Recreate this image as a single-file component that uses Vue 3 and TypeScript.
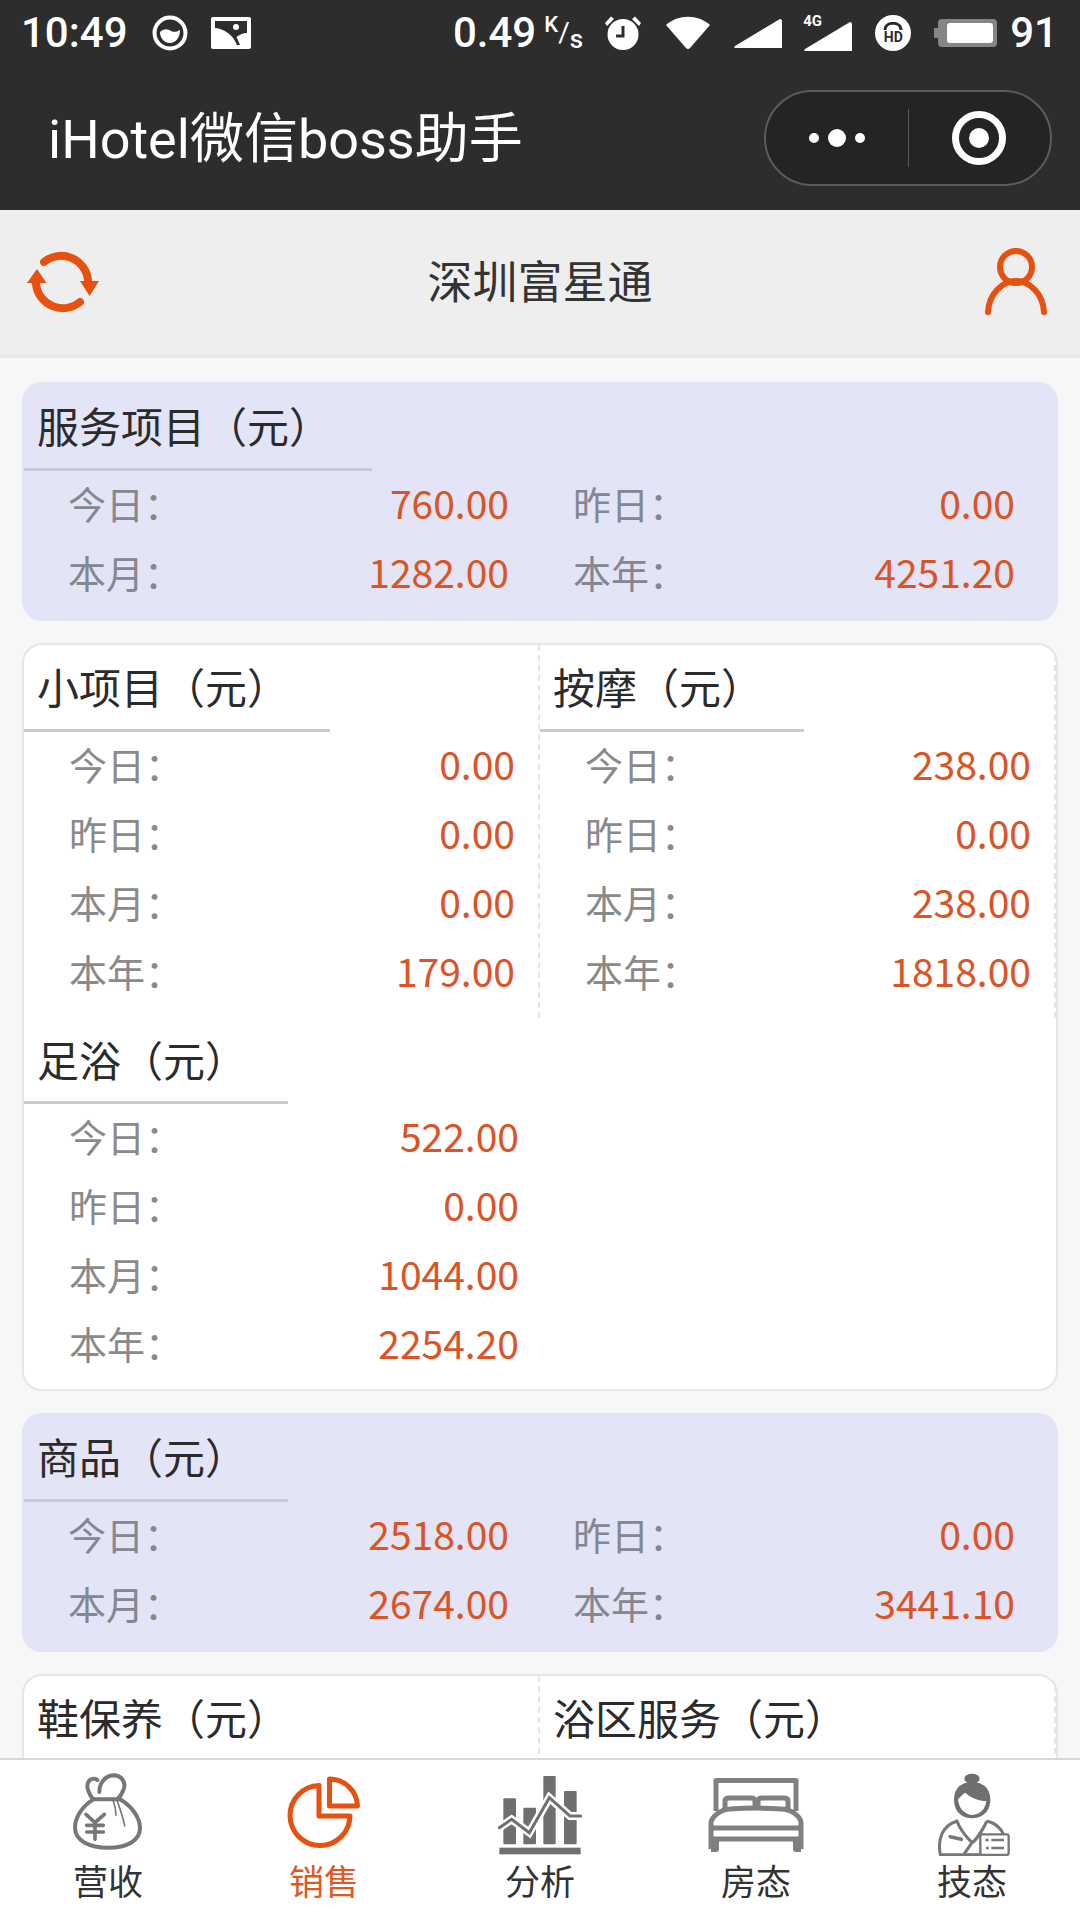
<script setup lang="ts">
interface Stat {
  label: string;
  value: string;
}
interface Section {
  title: string;
  stats: Stat[];
}

const stats = (today: string, yesterday: string, month: string, year: string): Stat[] => [
  { label: "今日：", value: today },
  { label: "昨日：", value: yesterday },
  { label: "本月：", value: month },
  { label: "本年：", value: year },
];

const service: Section = { title: "服务项目（元）", stats: stats("760.00", "0.00", "1282.00", "4251.20") };
const goods: Section = { title: "商品（元）", stats: stats("2518.00", "0.00", "2674.00", "3441.10") };

const serviceItems: Section[] = [
  { title: "小项目（元）", stats: stats("0.00", "0.00", "0.00", "179.00") },
  { title: "按摩（元）", stats: stats("238.00", "0.00", "238.00", "1818.00") },
  { title: "足浴（元）", stats: stats("522.00", "0.00", "1044.00", "2254.20") },
];
const goodsItems: Section[] = [
  { title: "鞋保养（元）", stats: [] },
  { title: "浴区服务（元）", stats: [] },
];

const tabs = [
  { key: "income", label: "营收" },
  { key: "sales", label: "销售" },
  { key: "analysis", label: "分析" },
  { key: "rooms", label: "房态" },
  { key: "staff", label: "技态" },
];
</script>

<template>
  <div class="page">
    <div class="topbar">
      <div class="status">
        <span class="clock">10:49</span>
        <svg class="st-moon" width="36" height="36" viewBox="0 0 36 36">
          <circle cx="18" cy="18" r="15.5" fill="none" stroke="#fff" stroke-width="4" />
          <path d="M8 17C12 13 16 14 19 16C23 18 26 16 28 15C28 22 24 28 18 28C12 28 8 23 8 17Z" fill="#fff" />
        </svg>
        <svg class="st-pic" width="40" height="32" viewBox="0 0 40 32">
          <rect width="40" height="32" rx="2" fill="#fff" />
          <path d="M4 4H36V16C32 16 28 18 25.5 20L29 28H26C22 18 14 12 4 11Z" fill="#2d2d2d" />
          <circle cx="25" cy="10" r="3" fill="#fff" />
        </svg>
        <span class="grow"></span>
        <span class="clock">0.49</span>
        <span class="speed"><i class="k">K</i><i class="slash">/</i><i class="s">s</i></span>
        <svg class="st-alarm" width="38" height="36" viewBox="0 0 38 36">
          <circle cx="19" cy="19.5" r="15.5" fill="#fff" />
          <path d="M19 11V21H12" fill="none" stroke="#2d2d2d" stroke-width="3" />
          <path d="M1 8L7 1.5L10 4L3 11ZM37 8L31 1.5L28 4L35 11Z" fill="#fff" />
        </svg>
        <svg class="st-wifi" width="44" height="34" viewBox="0 0 44 34">
          <path d="M0 9C12 -2 32 -2 44 9L24 32Q22 34 20 32Z" fill="#fff" />
        </svg>
        <svg class="st-signal" width="48" height="29" viewBox="0 0 48 29">
          <path d="M46 0Q48 0 48 2V29H2Q-1 29 1 27Z" fill="#fff" />
        </svg>
        <span class="st-4g">
          <i>4G</i>
          <svg width="48" height="29" viewBox="0 0 48 29">
            <path d="M46 0Q48 0 48 2V29H2Q-1 29 1 27Z" fill="#fff" />
          </svg>
        </span>
        <span class="st-hd">
          <svg width="20" height="9" viewBox="0 0 20 9">
            <path d="M2 8C2 -1 18 -1 18 8" fill="none" stroke="#2d2d2d" stroke-width="3" />
          </svg>
          <i>HD</i>
        </span>
        <span class="battery"><span class="battery-fill"></span></span>
        <span class="clock">91</span>
      </div>
      <div class="nav">
        <span class="nav-title">iHotel微信boss助手</span>
        <div class="capsule">
          <div class="capsule-side">
            <span class="dot"></span>
            <span class="dot big"></span>
            <span class="dot"></span>
          </div>
          <span class="capsule-line"></span>
          <div class="capsule-side">
            <span class="target"><span class="target-core"></span></span>
          </div>
        </div>
      </div>
    </div>

    <div class="header">
      <svg width="72" height="64" viewBox="0 0 72 64">
        <path d="M17 12A27 27 0 0 1 61 30" fill="none" stroke="#e8500f" stroke-width="8" stroke-linecap="round" />
        <path d="M53 31H72L62.5 46Z" fill="#e8500f" />
        <path d="M53 52A27 27 0 0 1 9 34" fill="none" stroke="#e8500f" stroke-width="8" stroke-linecap="round" />
        <path d="M0 33H19.500L10 19Z" fill="#e8500f" />
      </svg>
      <span class="hotel">深圳富星通</span>
      <svg width="64" height="68" viewBox="0 0 64 68">
        <circle cx="32" cy="19" r="16" fill="none" stroke="#e8500f" stroke-width="6" />
        <path d="M4 64C5 46 18 33 32 33C46 33 59 46 60 64" fill="none" stroke="#e8500f" stroke-width="6" stroke-linecap="round" />
      </svg>
    </div>

    <div class="content">
      <section class="card tinted">
        <h3 class="title">{{ service.title }}</h3>
        <div class="pairs">
          <div v-for="stat in service.stats" :key="stat.label" class="row">
            <span class="label">{{ stat.label }}</span>
            <span class="value">{{ stat.value }}</span>
          </div>
        </div>
      </section>

      <section class="card">
        <div class="cells">
          <div v-for="(item, i) in serviceItems" :key="item.title" class="cell" :class="{ plain: i === 2 }">
            <h3 class="title">{{ item.title }}</h3>
            <div v-for="stat in item.stats" :key="stat.label" class="row">
              <span class="label">{{ stat.label }}</span>
              <span class="value">{{ stat.value }}</span>
            </div>
          </div>
        </div>
      </section>

      <section class="card tinted">
        <h3 class="title">{{ goods.title }}</h3>
        <div class="pairs">
          <div v-for="stat in goods.stats" :key="stat.label" class="row">
            <span class="label">{{ stat.label }}</span>
            <span class="value">{{ stat.value }}</span>
          </div>
        </div>
      </section>

      <section class="card">
        <div class="cells">
          <div v-for="item in goodsItems" :key="item.title" class="cell tall">
            <h3 class="title">{{ item.title }}</h3>
          </div>
        </div>
      </section>
    </div>

    <nav class="tabs">
      <div v-for="tab in tabs" :key="tab.key" class="tab" :class="{ active: tab.key === 'sales' }">
        <svg v-if="tab.key === 'income'" width="120" height="90" viewBox="-36 0 360 270">
          <g fill="none" stroke="#777" stroke-width="12" stroke-linecap="round" stroke-linejoin="round">
            <path d="M100 100C60 125 45 160 45 185C45 225 90 245 145 245C200 245 240 225 240 185C240 155 215 120 180 100Z" />
            <path d="M100 100C85 85 78 60 85 48C90 38 105 35 112 42" />
            <path d="M118 78C118 50 135 30 160 28C185 28 200 50 190 72C185 85 178 95 172 100" />
            <path d="M78 145L105 170L133 145M105 170V220M80 178H130M80 198H130" stroke-width="11" />
            <path d="M160 105C165 120 168 135 168 148M172 105C180 130 190 155 194 180" stroke-width="5" />
          </g>
        </svg>
        <svg v-else-if="tab.key === 'sales'" width="108" height="90" viewBox="0 0 108 90">
          <g fill="none" stroke="#e8500f" stroke-width="5" stroke-linejoin="round">
            <path d="M49 19.500A30 30 0 1 0 80 50L49 50Z" />
            <path d="M59.500 13A28 28 0 0 1 87.500 40L59.500 40Z" />
          </g>
        </svg>
        <svg v-else-if="tab.key === 'analysis'" width="100" height="90" viewBox="0 0 300 270">
          <g fill="#6f6f6f">
            <rect x="40" y="97" width="38" height="138" rx="3" />
            <rect x="100" y="125" width="38" height="110" rx="3" />
            <rect x="160" y="30" width="37" height="205" rx="3" />
            <rect x="222" y="75" width="38" height="160" rx="3" />
            <rect x="28" y="245" width="244" height="20" />
          </g>
          <path d="M28 185L65 160L118 200L178 95L240 150H272" fill="none" stroke="#fff" stroke-width="24" />
          <path d="M28 185L65 160L118 200L178 95L240 150H272" fill="none" stroke="#6f6f6f" stroke-width="9" stroke-linecap="round" />
        </svg>
        <svg v-else-if="tab.key === 'rooms'" width="102" height="90" viewBox="0 0 102 90">
          <g transform="translate(0 7)" fill="none" stroke="#808080" stroke-width="5" stroke-linejoin="round">
            <path d="M11 38V7.500H91V38" />
            <path d="M20 36V28Q20 25 24 25H46Q50 25 50 28V34M53 34V28Q53 25 57 25H79Q83 25 83 28V36" />
            <path d="M6 76V50C6 45 15 36 25 36C40 35 62 35 76 36C88 36 96 45 96 50V76" />
            <path d="M6 55H96M6 66H96" />
            <path d="M6 76H11V66M96 76H91V66" stroke-width="6" />
          </g>
        </svg>
        <svg v-else width="100" height="90" viewBox="0 0 300 270">
          <ellipse cx="150" cy="38" rx="23" ry="15" fill="#6f6f6f" />
          <path d="M96 100C96 65 120 48 150 48C180 48 205 65 205 100C205 130 190 155 150 157C110 155 96 130 96 100Z" fill="#6f6f6f" />
          <path d="M108 100C118 90 125 82 130 80C145 95 170 105 193 105C190 130 175 145 150 147C125 145 110 125 108 100Z" fill="#fff" />
          <g fill="none" stroke="#777" stroke-width="9" stroke-linejoin="round">
            <path d="M55 266C46 220 60 180 105 165C115 195 135 215 150 230L125 266Z" />
            <path d="M195 165C215 170 235 185 245 205M195 165C180 195 160 225 150 230" />
            <path d="M125 266H176" />
            <path d="M85 212L118 220" stroke-width="11" stroke-linecap="round" />
          </g>
          <rect x="175" y="205" width="85" height="62" rx="6" fill="#fff" stroke="#777" stroke-width="7" />
          <path d="M190 222H200M208 222H246M192 246H200M208 246H246" stroke="#777" stroke-width="8" />
        </svg>
        <span class="tab-label">{{ tab.label }}</span>
      </div>
    </nav>
  </div>
</template>

<style>
body {
  margin: 0;
}
</style>

<style scoped>
.page {
  width: 1080px;
  height: 1920px;
  display: flex;
  flex-direction: column;
  overflow: hidden;
  background: #f7f7f8;
  font-family: "Noto Sans CJK SC", "Noto Sans", sans-serif;
}

.topbar {
  height: 210px;
  flex: none;
  background: #2d2d2d;
  color: #fff;
}

.status {
  height: 66px;
  display: flex;
  align-items: center;
  padding: 0 22px 0 21px;
  font-family: Roboto, sans-serif;
}

.grow {
  flex: 1;
}

.clock {
  font-size: 42px;
  line-height: 68px;
  font-weight: 500;
}

.st-moon {
  margin-left: 24px;
}

.st-pic {
  margin-left: 23px;
}

.speed {
  width: 40px;
  height: 38px;
  margin-left: 8px;
  display: flex;
  font-weight: 500;
  line-height: 1;
}

.speed i {
  font-style: normal;
}

.speed .k {
  font-size: 22px;
  align-self: flex-start;
}

.speed .slash {
  font-size: 28px;
  font-weight: 400;
  align-self: center;
}

.speed .s {
  font-size: 26px;
  align-self: flex-end;
}

.st-alarm {
  margin-left: 20px;
}

.st-wifi {
  margin-left: 24px;
}

.st-signal {
  margin-left: 24px;
}

.st-4g {
  width: 48px;
  height: 36px;
  margin-left: 22px;
  position: relative;
  display: flex;
  align-items: flex-end;
}

.st-4g i {
  position: absolute;
  left: -1px;
  top: -1px;
  font-size: 15px;
  font-style: normal;
  font-weight: 700;
  line-height: 1;
}

.st-hd {
  width: 36px;
  height: 36px;
  margin-left: 23px;
  border-radius: 50%;
  background: #fff;
  color: #2d2d2d;
  display: flex;
  flex-direction: column;
  align-items: center;
  justify-content: center;
  font-size: 14px;
  font-weight: 700;
  line-height: 13px;
}

.st-hd i {
  font-style: normal;
}

.battery {
  width: 59px;
  height: 28px;
  margin-left: 27px;
  border-radius: 4px;
  background: #858585;
  display: flex;
  align-items: center;
  justify-content: flex-end;
  padding-right: 4px;
  box-sizing: border-box;
  position: relative;
}

.battery::before {
  content: "";
  position: absolute;
  left: -4px;
  top: 9px;
  width: 4px;
  height: 10px;
  background: #858585;
}

.battery-fill {
  width: 46px;
  height: 20px;
  border-radius: 3px;
  background: #fff;
}

.status > .clock:last-child {
  margin-left: 13px;
}

.nav {
  height: 144px;
  display: flex;
  align-items: center;
  justify-content: space-between;
  padding: 0 28px 0 48px;
  box-sizing: border-box;
}

.nav-title {
  font-family: Roboto, "Noto Sans CJK SC", sans-serif;
  font-size: 54px;
  line-height: 1;
  margin-top: 4px;
}

.capsule {
  width: 288px;
  height: 96px;
  box-sizing: border-box;
  border: 2px solid #5c5c5c;
  border-radius: 48px;
  background: #242424;
  display: flex;
  align-items: center;
}

.capsule-side {
  flex: 1;
  display: flex;
  align-items: center;
  justify-content: center;
  gap: 9px;
}

.capsule-line {
  width: 1px;
  height: 58px;
  background: #5c5c5c;
}

.dot {
  width: 10px;
  height: 10px;
  border-radius: 50%;
  background: #fff;
}

.dot.big {
  width: 18px;
  height: 18px;
}

.target {
  width: 54px;
  height: 54px;
  box-sizing: border-box;
  border: 7px solid #fff;
  border-radius: 50%;
  display: flex;
  align-items: center;
  justify-content: center;
}

.target-core {
  width: 20px;
  height: 20px;
  border-radius: 50%;
  background: #fff;
}

.header {
  height: 148px;
  flex: none;
  box-sizing: border-box;
  background: #efeeef;
  border-bottom: 3px solid #e8e8e8;
  display: flex;
  align-items: center;
  justify-content: space-between;
  padding: 0 32px 2px 27px;
}

.hotel {
  font-size: 45px;
  color: #333;
  line-height: 1;
  margin: 0 3px 5px 0;
}

.content {
  flex: 1;
  min-height: 0;
  overflow: hidden;
  padding: 24px 22px 0;
}

.card {
  border: 2px solid #e6e6e6;
  border-radius: 20px;
  background: #fff;
  margin-bottom: 22px;
  overflow: hidden;
}

.card.tinted {
  background: #e3e4f6;
  border-color: #e3e4f6;
  padding-bottom: 10px;
}

.title {
  display: table;
  margin: 0;
  padding: 0 41px 3px 13px;
  font-size: 42px;
  font-weight: 400;
  line-height: 81px;
  color: #2b2b2b;
  border-bottom: 3px solid #cbcbcb;
}

.tinted .title {
  border-bottom-color: #c8cadb;
}

.pairs {
  display: grid;
  grid-template-columns: 504px 504px;
}

.pairs .row:nth-child(odd) {
  padding: 0 19px 7px 44px;
}

.pairs .row:nth-child(even) {
  padding: 0 17px 7px 45px;
}

.cells {
  display: grid;
  grid-template-columns: 516px 516px;
}

.cell {
  box-sizing: border-box;
  border-right: 2px dashed #e5e5e5;
  padding-bottom: 10px;
}

.cell .row {
  padding: 0 23px 7px 45px;
}

.cell.plain {
  border-right: none;
  padding-bottom: 9px;
}

.cell.plain .title {
  padding-bottom: 2px;
}

.cell.plain .row {
  padding-right: 21px;
}

.cell.tall {
  height: 160px;
}

.row {
  height: 69px;
  box-sizing: border-box;
  display: flex;
  align-items: center;
  justify-content: space-between;
  font-size: 38px;
}

.label {
  color: #8a8a8a;
}

.tinted .label {
  color: #84878f;
}

.value {
  font-size: 39px;
  color: #dc5325;
}

.tabs {
  height: 162px;
  flex: none;
  box-sizing: border-box;
  display: flex;
  background: #fff;
  border-top: 2px solid #d8d8d8;
}

.tab {
  flex: 1;
  display: flex;
  flex-direction: column;
  align-items: center;
  padding-top: 6px;
}

.tab-label {
  font-size: 35px;
  line-height: 40px;
  margin-top: 4px;
  color: #333;
}

.tab.active .tab-label {
  color: #e2571e;
}
</style>
